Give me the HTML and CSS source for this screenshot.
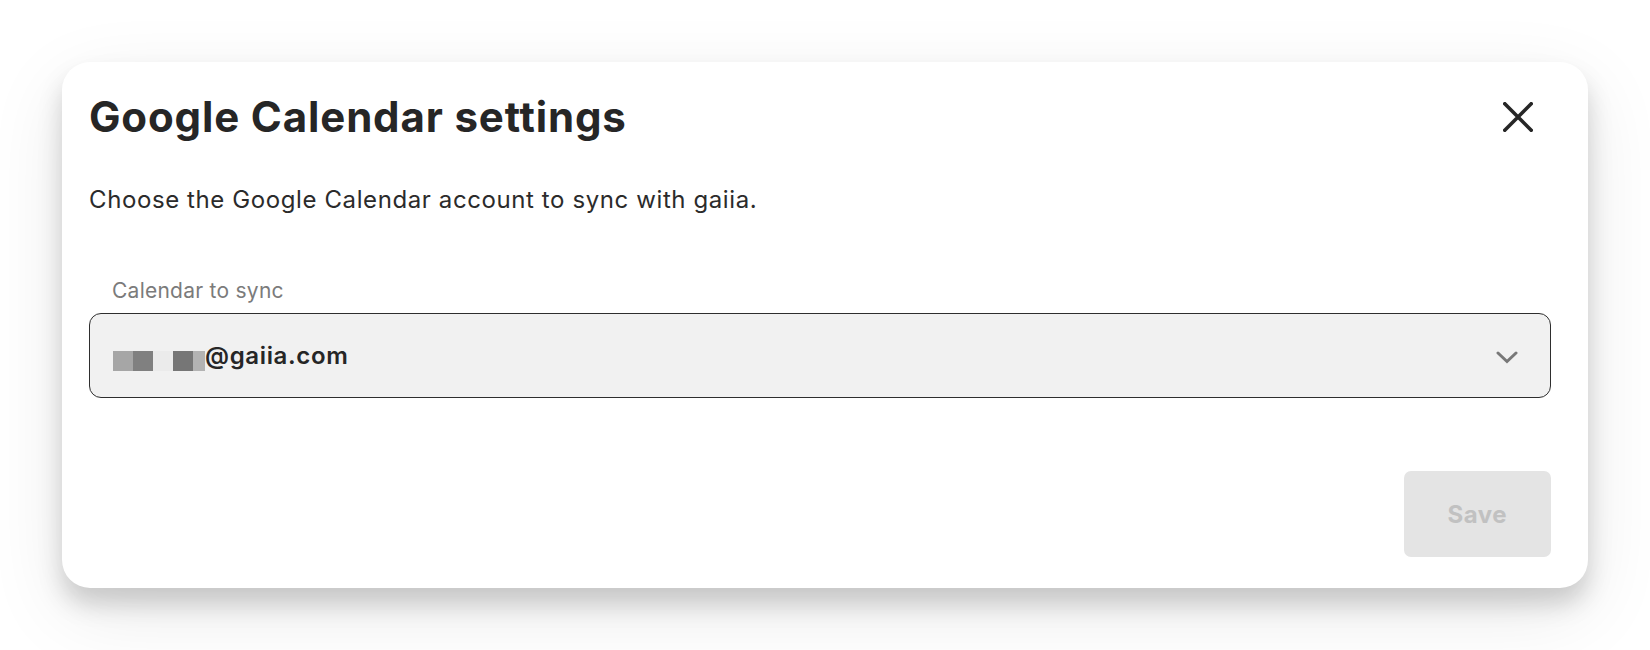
FILE: index.html
```html
<!DOCTYPE html>
<html lang="en">
<head>
<meta charset="utf-8">
<title>Google Calendar settings</title>
<link rel="stylesheet" href="styles.css">
</head>
<body>
<div class="page">
<div class="dialog">
  <div class="dialog-header">
    <h1 class="dialog-title">Google Calendar settings</h1>
    <button class="close-btn" aria-label="Close">
      <svg width="30" height="30" viewBox="0 0 30 30" aria-hidden="true">
        <path d="M1.8 1.8 L28.2 28.2 M28.2 1.8 L1.8 28.2" stroke="#262626" stroke-width="3.6" stroke-linecap="square" fill="none"/>
      </svg>
    </button>
  </div>
  <p class="dialog-desc">Choose the Google Calendar account to sync with gaiia.</p>
  <div class="field">
    <label class="field-label">Calendar to sync</label>
    <div class="select">
      <div class="select-value">
        <span class="redacted">
          <span class="px px1"></span><span class="px px2"></span><span class="px px3"></span><span class="px px4"></span><span class="px px5"></span>
        </span>
        <span class="email">@gaiia.com</span>
      </div>
      <svg class="chevron" width="22" height="13" viewBox="0 0 22 13" aria-hidden="true">
        <polyline points="2,2 11,10.5 20,2" fill="none" stroke="#787878" stroke-width="3" stroke-linecap="round" stroke-linejoin="miter"/>
      </svg>
    </div>
  </div>
  <div class="dialog-footer">
    <button class="save-btn" disabled>Save</button>
  </div>
</div>
</div>
</body>
</html>
```

FILE: styles.css
```css
* { box-sizing: border-box; }

html, body {
  margin: 0;
  padding: 0;
  background: #ffffff;
}

body {
  font-family: Inter, "Noto Sans", "Liberation Sans", sans-serif;
  color: #2a2a2a;
}

.page {
  min-height: 650px;
  padding: 62px 62px 0 62px;
}

.dialog {
  width: 1526px;
  height: 526px;
  background: #ffffff;
  border-radius: 28px;
  padding: 30px 37px 31px 27px;
  display: flex;
  flex-direction: column;
  box-shadow: 0 16px 24px rgba(0, 0, 0, 0.17), 0 24px 80px rgba(0, 0, 0, 0.09);
}

.dialog-header {
  display: flex;
  align-items: center;
  justify-content: space-between;
  height: 50px;
}

.dialog-title {
  margin: 0;
  font-size: 42px;
  line-height: 50px;
  font-weight: 700;
  color: #262626;
  letter-spacing: 0.85px;
}

.close-btn {
  width: 40px;
  height: 40px;
  margin-right: 13px;
  padding: 0;
  border: none;
  background: transparent;
  display: flex;
  align-items: center;
  justify-content: center;
  cursor: pointer;
}

.dialog-desc {
  margin: 40px 0 0 0;
  font-size: 24px;
  line-height: 36px;
  color: #2b2b2b;
  letter-spacing: 0.6px;
}

.field {
  margin-top: 58px;
  display: flex;
  flex-direction: column;
}

.field-label {
  font-size: 21px;
  line-height: 30px;
  color: #7b7b7b;
  padding-left: 23px;
  letter-spacing: 0.25px;
}

.select {
  margin-top: 7px;
  height: 85px;
  border: 1px solid #2e2e2e;
  border-radius: 12px;
  background: #f1f1f1;
  display: flex;
  align-items: center;
  justify-content: space-between;
  padding: 0 32px 0 23px;
}

.select-value {
  display: flex;
  align-items: center;
}

.redacted {
  display: flex;
  height: 20px;
  margin-top: 10px;
}

.px { display: block; height: 20px; width: 20px; }
.px1 { background: #a6a6a6; }
.px2 { background: #808080; }
.px3 { background: #ebebeb; }
.px4 { background: #767676; }
.px5 { background: #b3b3b3; width: 12px; }

.email {
  font-size: 24px;
  line-height: 36px;
  font-weight: 600;
  color: #262626;
  letter-spacing: 0.65px;
}

.chevron {
  margin-top: 3px;
}

.dialog-footer {
  margin-top: auto;
  display: flex;
  justify-content: flex-end;
}

.save-btn {
  height: 86px;
  padding: 0 44px;
  min-width: 146px;
  border: none;
  border-radius: 7px;
  background: #e4e4e4;
  color: #c1c1c1;
  font-family: Inter, "Noto Sans", "Liberation Sans", sans-serif;
  font-size: 24px;
  font-weight: 700;
  letter-spacing: 0.5px;
}
```
